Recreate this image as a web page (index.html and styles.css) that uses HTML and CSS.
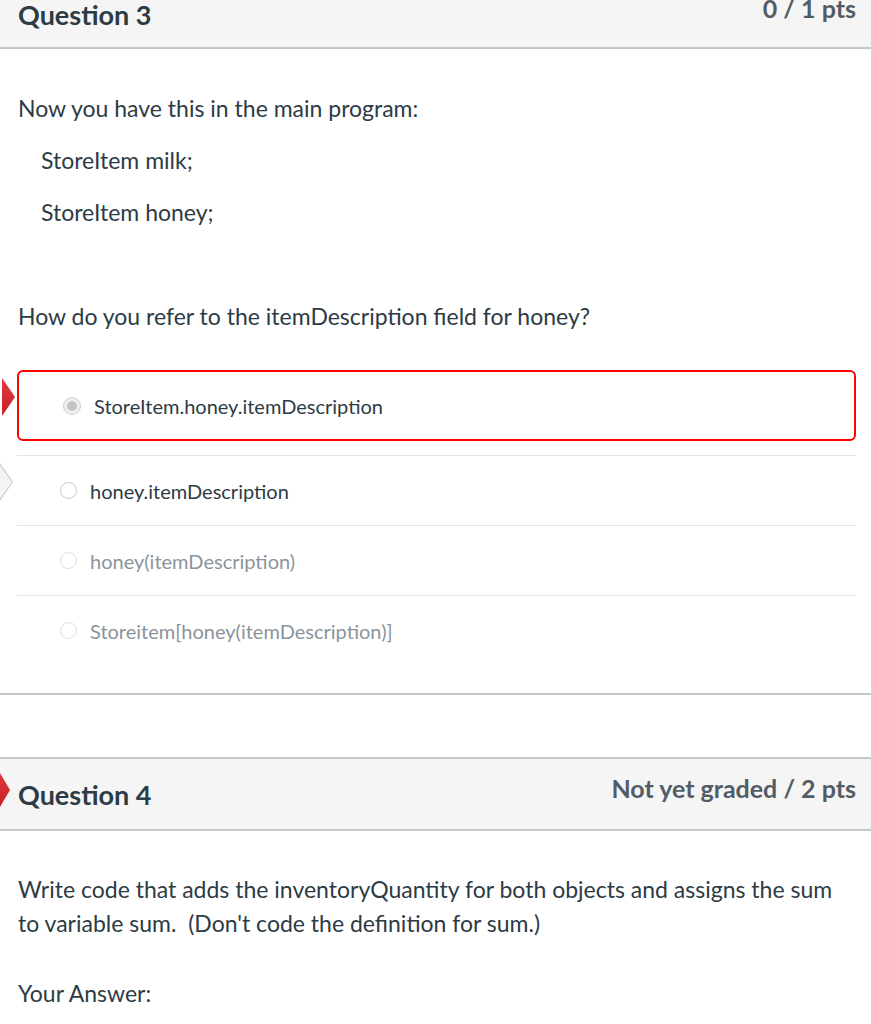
FILE: index.html
```html
<!DOCTYPE html>
<html>
<head>
<meta charset="utf-8">
<link rel="stylesheet" href="styles.css">
</head>
<body>
<div class="page">
  <section class="question q3">
    <div class="q-header q3-header">
      <h2 class="q-title">Question 3</h2>
      <div class="q-pts q3-pts">0 / 1 pts</div>
    </div>
    <div class="q-body q3-body">
      <p class="txt">Now you have this in the main program:</p>
      <p class="txt code">StoreItem milk;</p>
      <p class="txt code">StoreItem honey;</p>
      <p class="txt">&nbsp;</p>
      <p class="txt">How do you refer to the itemDescription field for honey?</p>
      <div class="answers">
        <div class="answer selected">
          <span class="radio radio-on"></span>
          <span class="a-text">StoreItem.honey.itemDescription</span>
          <svg class="marker marker-red" width="14" height="38" viewBox="0 0 14 38"><defs><linearGradient id="rg" x1="0" y1="0" x2="0" y2="1"><stop offset="0" stop-color="#e0393c"/><stop offset="1" stop-color="#c8202a"/></linearGradient></defs><polygon points="0,0 13,19 0,38" fill="url(#rg)"/></svg>
        </div>
        <div class="answer row">
          <span class="radio"></span>
          <span class="a-text">honey.itemDescription</span>
          <svg class="marker marker-gray" width="14" height="40" viewBox="0 0 14 40"><polygon points="-1,1 12.5,20 -1,39" fill="#f4f4f4" stroke="#cfcfcf" stroke-width="1.2"/></svg>
        </div>
        <div class="answer row muted">
          <span class="radio"></span>
          <span class="a-text">honey(itemDescription)</span>
        </div>
        <div class="answer row muted">
          <span class="radio"></span>
          <span class="a-text">Storeitem[honey(itemDescription)]</span>
        </div>
      </div>
    </div>
  </section>

  <section class="question q4">
    <div class="q-header q4-header">
      <h2 class="q-title q4-title">Question 4</h2>
      <div class="q-pts q4-pts">Not yet graded / 2 pts</div>
      <svg class="marker marker-q4" width="11" height="34" viewBox="0 0 11 34"><defs><linearGradient id="rg2" x1="0" y1="0" x2="0" y2="1"><stop offset="0" stop-color="#e0393c"/><stop offset="1" stop-color="#c8202a"/></linearGradient></defs><polygon points="0,0 10,17 0,34" fill="url(#rg2)"/></svg>
    </div>
    <div class="q-body q4-body">
      <p class="txt q4-text">Write code that adds the inventoryQuantity for both objects and assigns the sum to variable sum.&nbsp; (Don't code the definition for sum.)</p>
      <p class="txt q4-text answer-label">Your Answer:</p>
    </div>
  </section>
</div>
</body>
</html>
```

FILE: styles.css
```css
html, body {
  margin: 0;
  padding: 0;
  background: #ffffff;
}

body {
  font-family: Lato, "Open Sans", "Liberation Sans", sans-serif;
  color: #2d3b45;
  width: 871px;
  overflow: hidden;
}

.page {
  width: 871px;
}

.question {
  position: relative;
}

.q-header {
  position: relative;
  background: #f5f5f5;
  display: flex;
  justify-content: space-between;
  align-items: flex-start;
  padding: 0 15px 0 18px;
}

.q3-header {
  height: 47px;
  border-bottom: 2px solid #c4c8cb;
}

.q-title {
  margin: 0;
  font-size: 27px;
  font-weight: 700;
  color: #2d3b45;
  line-height: 30px;
}

.q-pts {
  font-weight: 700;
  color: #525c65;
}

.q3-pts {
  font-size: 25px;
  line-height: 16px;
}

.q-body {
  padding: 0 15px 0 18px;
}

.q3-body {
  padding-top: 44px;
  padding-bottom: 28px;
  border-bottom: 2px solid #c4c8cb;
}

.txt {
  margin: 0 0 22px 0;
  font-size: 23px;
  line-height: 30px;
}

.txt.code {
  padding-left: 23px;
}

.answers {
  margin-top: 39px;
  margin-left: -1px;
  margin-right: 0;
}

.answer {
  position: relative;
  display: flex;
  align-items: center;
  font-size: 20px;
  color: #2d3b45;
}

.answer.selected {
  height: 67px;
  border: 2px solid #ff0000;
  border-radius: 6px;
  padding-left: 44px;
  margin-bottom: 14px;
}

.answer.row {
  height: 69px;
  border-top: 1px solid #e2e4e6;
  padding-left: 43px;
}

.answer.muted {
  color: #8a949c;
}

.radio {
  width: 17px;
  height: 17px;
  border-radius: 50%;
  border: 1px solid #c9c9c9;
  background: #ffffff;
  box-sizing: border-box;
  flex: none;
  margin-right: 13px;
  position: relative;
}

.answer.muted .radio {
  border-color: #dedede;
}

.radio-on {
  width: 18px;
  height: 18px;
  background: #eeeeee;
  border-color: #cfcfcf;
  margin-right: 13px;
}

.radio-on::after {
  content: "";
  position: absolute;
  left: 3px;
  top: 3px;
  width: 10px;
  height: 10px;
  border-radius: 50%;
  background: #c4c4c4;
}

.marker {
  position: absolute;
}

.marker-red {
  left: -17px;
  top: 6px;
}

.marker-gray {
  left: -17px;
  top: 6px;
}

.marker-q4 {
  left: 0;
  top: 14px;
}

.q4 {
  margin-top: 62px;
}

.q4-header {
  height: 70px;
  border-top: 2px solid #c4c8cb;
  border-bottom: 2px solid #c4c8cb;
}

.q4-title {
  margin-top: 21px;
}

.q4-pts {
  font-size: 25px;
  line-height: 30px;
  margin-top: 14px;
}

.q4-body {
  padding-top: 41px;
}

.q4-text {
  line-height: 34px;
  margin-bottom: 36px;
}
```
